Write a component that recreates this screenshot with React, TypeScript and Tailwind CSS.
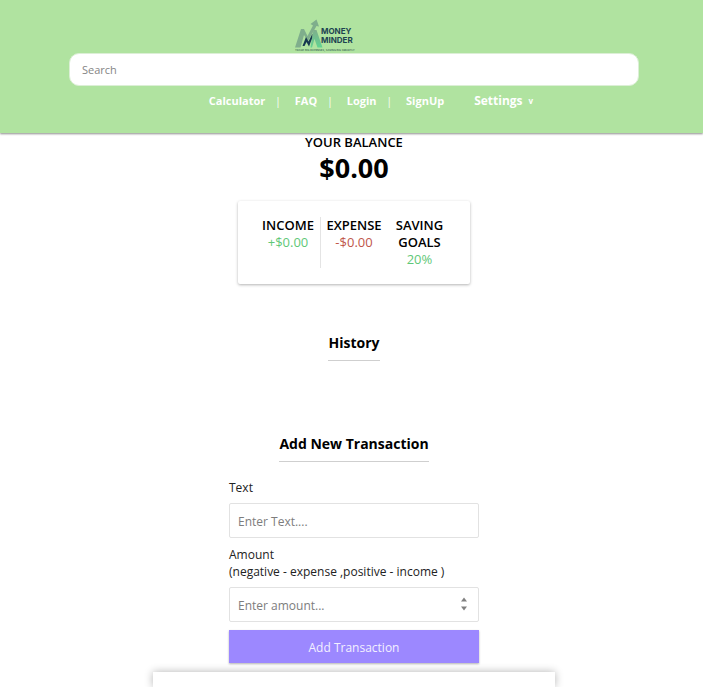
import React from "react";

function Logo() {
  return (
    <svg viewBox="0 0 62 34" className="h-[34px] w-[62px]" role="img" aria-label="Money Minder">
      <defs>
        <linearGradient id="leg" x1="0" y1="0" x2="0" y2="1">
          <stop offset="0" stopColor="#7fae8c" />
          <stop offset="1" stopColor="#62d392" />
        </linearGradient>
      </defs>
      <path d="M1 29.5 L7 11 H10 L13.5 18 L19 7.5 L16.5 6 L22.5 1.5 L25 8.5 L22.5 8 L14 23 L10 17 L6.5 29.5Z" fill="#7fae8c" />
      <path d="M19.5 12 H22.5 L28.5 29.5 H23.5 L20.5 21 L18 29.5 H16.5 L18 20Z" fill="url(#leg)" />
      <path d="M8.5 28 L12 19 L14.5 23.5 L18.5 15.5 L18 20.5 L15 28.5 L12.5 24 L10.5 28Z" fill="#16384f" />
      <g fill="#1d4451" fontFamily="Inter, sans-serif" fontWeight="700" fontSize="8">
        <text x="27" y="16">MONEY</text>
        <text x="27" y="25">MINDER</text>
      </g>
      <text x="1" y="33" fill="#45705a" fontFamily="Inter, sans-serif" fontWeight="600" fontSize="2.7">
        TRACK BIG EXPENSES, SAVING BIG SMARTLY
      </text>
    </svg>
  );
}

const links = ["Calculator", "FAQ", "Login", "SignUp"];

function Header() {
  return (
    <header className="flex flex-col items-center bg-[#b0e3a0] pt-[18px] pb-[22px] pl-[5px] shadow-[0_1px_2px_rgba(0,0,0,0.45)]">
      <div className="flex w-full justify-center pr-[58px]">
        <Logo />
      </div>
      <input
        type="search"
        aria-label="Search"
        placeholder="Search"
        className="mt-px h-[33px] w-[570px] max-w-full rounded-[10px] border border-[#dcefd6] bg-white px-3 text-[11px] outline-none placeholder:text-[#858585]"
      />
      <nav className="mt-[5px] flex h-5 items-center pl-[34px] text-[11px] font-bold text-white">
        {links.map((link, i) => (
          <React.Fragment key={link}>
            {i > 0 && <span className="mr-[14px] ml-[10px] text-[10px] font-normal">|</span>}
            <a href="#">{link}</a>
          </React.Fragment>
        ))}
        <button type="button" className="ml-[30px] flex items-center gap-[6px] text-xs font-bold">
          Settings <span className="text-[8px]">v</span>
        </button>
      </nav>
    </header>
  );
}

function Summary() {
  return (
    <section className="mt-4 flex w-[232px] justify-center rounded-[2px] bg-white px-[18px] py-4 text-[13px] leading-[17px] shadow-[0_1px_3px_rgba(0,0,0,0.3)]">
      <div className="w-[65px] border-r border-[#e4e4e4] text-center">
        <h4 className="font-semibold">INCOME</h4>
        <p className="text-[#5fc878]">+$0.00</p>
      </div>
      <div className="w-[66px] text-center">
        <h4 className="font-semibold">EXPENSE</h4>
        <p className="text-[#c0564a]">-$0.00</p>
      </div>
      <div className="w-[65px] text-center">
        <h4 className="font-semibold">SAVING GOALS</h4>
        <p className="text-[#5fc878]">20%</p>
      </div>
    </section>
  );
}

const heading = "border-b border-[#cfcfcf] pb-[7px] text-sm leading-5 font-bold";

const field =
  "block h-[35px] w-full rounded-[2px] border border-[#e2e2e2] bg-white px-2 pt-0.5 text-xs outline-none placeholder:text-[#7d7d7d]";

export default function App() {
  return (
    <div className="flex min-h-screen flex-col bg-white font-['Open_Sans','Noto_Sans',sans-serif] text-black">
      <Header />
      <main className="flex flex-1 flex-col items-center pl-[5px]">
        <h4 className="mt-px text-[13px] leading-[17px] font-semibold">YOUR BALANCE</h4>
        <h1 className="text-[27px] leading-[34px] font-bold">$0.00</h1>
        <Summary />
        <h3 className={heading + " mt-[49px]"}>History</h3>
        <h3 className={heading + " mt-[73px]"}>Add New Transaction</h3>
        <form className="mt-[17px] w-[250px] text-xs leading-[17px] text-[#222]">
          <label htmlFor="text" className="mb-[7px] block">
            Text
          </label>
          <input id="text" type="text" placeholder="Enter Text...." className={field} />
          <label htmlFor="amount" className="mt-2 mb-[7px] block">
            Amount
            <br />
            (negative - expense ,positive - income )
          </label>
          <div className="relative">
            <input
              id="amount"
              type="number"
              placeholder="Enter amount..."
              className={field + " [appearance:textfield] [&::-webkit-inner-spin-button]:appearance-none"}
            />
            <svg
              viewBox="0 0 8 14"
              className="pointer-events-none absolute top-[10px] right-[11px] h-[14px] w-2"
              fill="#808080"
              aria-hidden="true"
            >
              <path d="M4 0.5 L7 4.5 H1Z M1 9.5 H7 L4 13.5Z" />
            </svg>
          </div>
          <button
            type="button"
            className="mt-2 block h-[33px] w-full bg-[#9c88ff] pt-0.5 text-xs text-[#f3f0ff] shadow-[0_1px_2px_rgba(0,0,0,0.3)]"
          >
            Add Transaction
          </button>
        </form>
        <section className="mt-[9px] min-h-[15px] w-[402px] max-w-full flex-1 bg-white shadow-[0_0_8px_rgba(0,0,0,0.3)]" />
      </main>
    </div>
  );
}
